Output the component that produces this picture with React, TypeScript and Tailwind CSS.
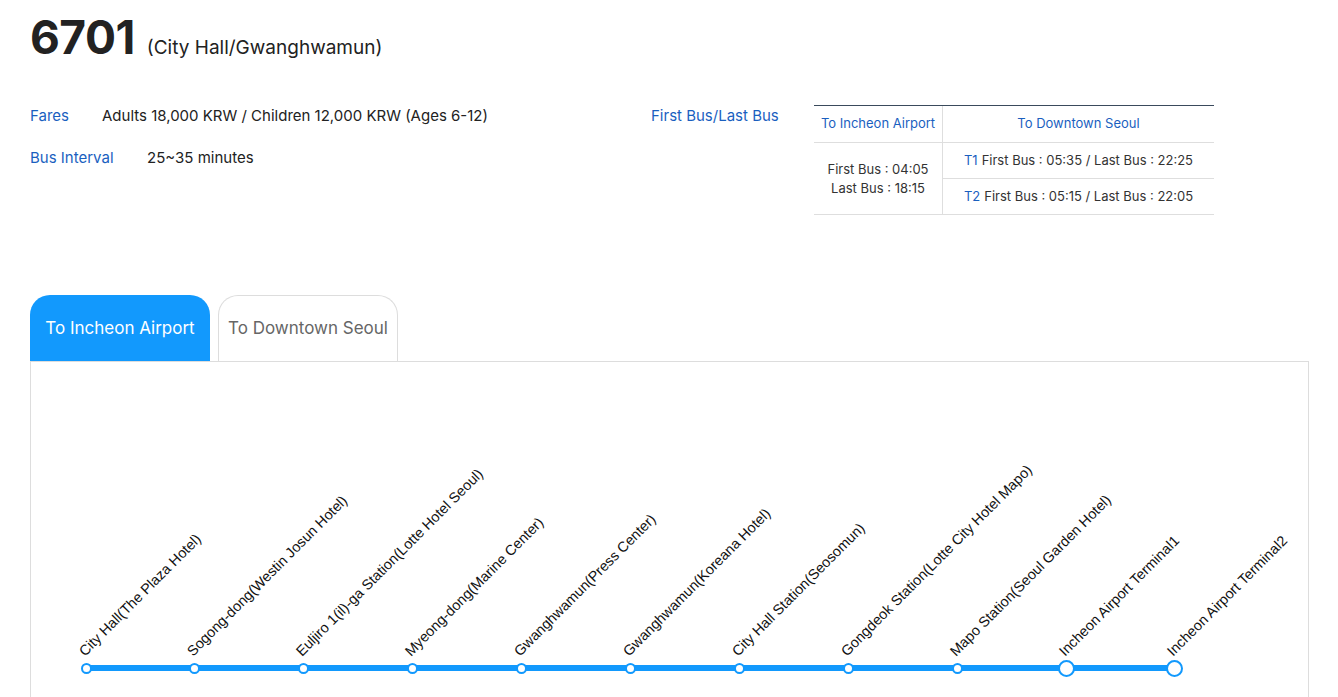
import React from "react";

const stations = [
  { name: "City Hall(The Plaza Hotel)", big: false },
  { name: "Sogong-dong(Westin Josun Hotel)", big: false },
  { name: "Euljiro 1(il)-ga Station(Lotte Hotel Seoul)", big: false },
  { name: "Myeong-dong(Marine Center)", big: false },
  { name: "Gwanghwamun(Press Center)", big: false },
  { name: "Gwanghwamun(Koreana Hotel)", big: false },
  { name: "City Hall Station(Seosomun)", big: false },
  { name: "Gongdeok Station(Lotte City Hotel Mapo)", big: false },
  { name: "Mapo Station(Seoul Garden Hotel)", big: false },
  { name: "Incheon Airport Terminal1", big: true },
  { name: "Incheon Airport Terminal2", big: true },
];

export default function App() {
  return (
    <div
      className="w-[1338px] h-[697px] overflow-hidden bg-white text-[#222]"
      style={{ fontFamily: "Inter, 'Noto Sans', sans-serif" }}
    >
      <div className="pl-[30px] pr-[29px]">
        {/* Title */}
        <div className="flex items-baseline pt-[9px] h-[62px]">
          <span className="text-[46px] font-bold leading-[56px] tracking-[-0.5px] text-[#222]">6701</span>
          <span className="ml-[12px] text-[19px] text-[#222]">(City Hall/Gwanghwamun)</span>
        </div>

        {/* Info */}
        <div className="flex mt-[44px] h-[110px]">
          <div className="w-[621px] text-[15px]">
            <div className="flex h-[20px] items-center">
              <span className="w-[72px] text-[#1a5fbf]">Fares</span>
              <span className="text-[#222]">Adults 18,000 KRW / Children 12,000 KRW (Ages 6-12)</span>
            </div>
            <div className="flex h-[20px] items-center mt-[22px]">
              <span className="w-[117px] text-[#1a5fbf]">Bus Interval</span>
              <span className="text-[#222]">25~35 minutes</span>
            </div>
          </div>
          <div className="w-[163px] text-[15px] text-[#1a5fbf] h-[20px] flex items-center">First Bus/Last Bus</div>
          <div className="-mt-[1px] w-[400px] h-[110px] border-t border-[#3a4a5c] text-[13px]">
            <div className="flex h-[37px] border-b border-[#dedede]">
              <div className="w-[129px] border-r border-[#dedede] flex items-center justify-center text-[#1a5fbf]">
                To Incheon Airport
              </div>
              <div className="flex-1 flex items-center justify-center text-[#1a5fbf]">To Downtown Seoul</div>
            </div>
            <div className="flex border-b border-[#dedede]">
              <div className="w-[129px] border-r border-[#dedede] flex flex-col items-center justify-center leading-[19px] text-[#333]">
                <span>First Bus : 04:05</span>
                <span>Last Bus : 18:15</span>
              </div>
              <div className="flex-1">
                <div className="h-[36px] border-b border-[#dedede] flex items-center justify-center text-[#333]">
                  <span className="text-[#1a5fbf] mr-[4px]">T1</span>First Bus : 05:35 / Last Bus : 22:25
                </div>
                <div className="h-[35px] flex items-center justify-center text-[#333]">
                  <span className="text-[#1a5fbf] mr-[4px]">T2</span>First Bus : 05:15 / Last Bus : 22:05
                </div>
              </div>
            </div>
          </div>
        </div>

        {/* Tabs */}
        <div className="mt-[79px] flex items-end gap-[8px]">
          <div className="w-[180px] h-[66px] rounded-t-[20px] bg-[#1299fd] text-white text-[17px] flex items-center justify-center pt-[1px]">
            To Incheon Airport
          </div>
          <div className="w-[180px] h-[66px] rounded-t-[20px] border border-b-0 border-[#dddddd] text-[#666] text-[17px] flex items-center justify-center">
            To Downtown Seoul
          </div>
        </div>

        {/* Panel */}
        <div className="border border-[#dddddd] h-[420px] pt-[262px]">
          <div className="relative flex pl-[0.5px]">
            <div className="absolute left-[55px] w-[1090px] top-[41px] h-[6px] bg-[#1299fd]" />
            {stations.map((s, i) => (
              <div key={i} className="relative w-[108.9px] h-[88px] shrink-0">
                <div
                  className="absolute left-[55px] bottom-[53px] origin-bottom-left -rotate-45 whitespace-nowrap text-[14.4px] leading-[16px] text-[#111]"
                  style={{ fontFamily: "'Liberation Sans', Arial, sans-serif" }}
                >
                  {s.name}
                </div>
                {s.big ? (
                  <div className="absolute left-[46px] top-[36px] w-[17px] h-[17px] rounded-full bg-white border-[2.5px] border-[#1299fd]" />
                ) : (
                  <div className="absolute left-[49px] top-[39px] w-[11px] h-[11px] rounded-full bg-white border-[2px] border-[#1299fd]" />
                )}
              </div>
            ))}
          </div>
        </div>
      </div>
    </div>
  );
}
